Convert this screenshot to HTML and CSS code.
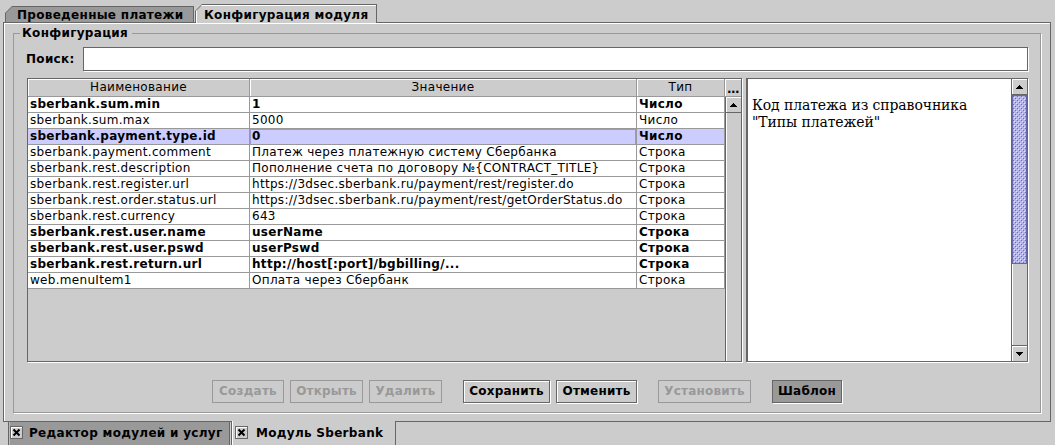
FILE: index.html
```html
<!DOCTYPE html>
<html lang="ru">
<head>
<meta charset="utf-8">
<title>Модуль Sberbank</title>
<link rel="stylesheet" href="styles.css">
</head>
<body>
<div class="tabs-top">
  <div class="tab tab-off"><span class="tab-label">Проведенные платежи</span></div>
  <div class="tab tab-on"><span class="tab-label">Конфигурация модуля</span></div>
</div>
<div class="panel">
  <fieldset class="group">
    <legend>Конфигурация</legend>
    <div class="group-body">
      <div class="search">
        <label class="search-label">Поиск:</label>
        <div class="field"></div>
      </div>
      <div class="split">
        <div class="table-pane">
          <div class="table">
            <div class="thead">
              <div class="th">Наименование</div>
              <div class="th">Значение</div>
              <div class="th">Тип</div>
            </div>
            <div class="row b"><div class="td">sberbank.sum.min</div><div class="td">1</div><div class="td">Число</div></div>
            <div class="row"><div class="td">sberbank.sum.max</div><div class="td">5000</div><div class="td">Число</div></div>
            <div class="row b sel"><div class="td">sberbank.payment.type.id</div><div class="td focus">0</div><div class="td">Число</div></div>
            <div class="row"><div class="td">sberbank.payment.comment</div><div class="td">Платеж через платежную систему Сбербанка</div><div class="td">Строка</div></div>
            <div class="row"><div class="td">sberbank.rest.description</div><div class="td">Пополнение счета по договору №{CONTRACT_TITLE}</div><div class="td">Строка</div></div>
            <div class="row"><div class="td">sberbank.rest.register.url</div><div class="td">https://3dsec.sberbank.ru/payment/rest/register.do</div><div class="td">Строка</div></div>
            <div class="row"><div class="td">sberbank.rest.order.status.url</div><div class="td">https://3dsec.sberbank.ru/payment/rest/getOrderStatus.do</div><div class="td">Строка</div></div>
            <div class="row"><div class="td">sberbank.rest.currency</div><div class="td">643</div><div class="td">Строка</div></div>
            <div class="row b"><div class="td">sberbank.rest.user.name</div><div class="td">userName</div><div class="td">Строка</div></div>
            <div class="row b"><div class="td">sberbank.rest.user.pswd</div><div class="td">userPswd</div><div class="td">Строка</div></div>
            <div class="row b"><div class="td">sberbank.rest.return.url</div><div class="td">http://host[:port]/bgbilling/...</div><div class="td">Строка</div></div>
            <div class="row"><div class="td">web.menuItem1</div><div class="td">Оплата через Сбербанк</div><div class="td">Строка</div></div>
          </div>
          <div class="tside">
            <div class="tcorner">...</div>
            <div class="vscroll">
              <div class="arrow arrow-up"><svg width="7" height="4" viewBox="0 0 7 4"><path d="M3 0h1v1h-1zM2 1h3v1h-3zM1 2h5v1h-5zM0 3h7v1h-7z"/></svg></div>
              <div class="track"></div>
            </div>
          </div>
        </div>
        <div class="text-pane">
          <div class="view">Код платежа из справочника<br>"Типы платежей"</div>
          <div class="vscroll">
            <div class="arrow arrow-up"><svg width="7" height="4" viewBox="0 0 7 4"><path d="M3 0h1v1h-1zM2 1h3v1h-3zM1 2h5v1h-5zM0 3h7v1h-7z"/></svg></div>
            <div class="thumb"></div>
            <div class="track"></div>
            <div class="arrow arrow-down"><svg width="7" height="4" viewBox="0 0 7 4"><path d="M0 0h7v1h-7zM1 1h5v1h-5zM2 2h3v1h-3zM3 3h1v1h-1z"/></svg></div>
          </div>
        </div>
      </div>
      <div class="buttons">
        <div class="btn off w-create">Создать</div>
        <div class="btn off w-open">Открыть</div>
        <div class="btn off w-del">Удалить</div>
        <div class="btn sep w-save">Сохранить</div>
        <div class="btn w-cancel">Отменить</div>
        <div class="btn off sep w-set">Установить</div>
        <div class="btn pressed sep w-tpl">Шаблон</div>
      </div>
    </div>
  </fieldset>
</div>
<div class="tabs-bottom">
  <div class="btab btab-off">
    <span class="xbox"><svg width="11" height="11" viewBox="0 0 11 11"><path d="M2.5 2.5L8.5 8.5M8.5 2.5L2.5 8.5" stroke="#000" stroke-width="2"/></svg></span>
    <span class="btab-text">Редактор модулей и услуг</span>
  </div>
  <div class="btab btab-on">
    <span class="xbox"><svg width="11" height="11" viewBox="0 0 11 11"><path d="M2.5 2.5L8.5 8.5M8.5 2.5L2.5 8.5" stroke="#000" stroke-width="2"/></svg></span>
    <span class="btab-text">Модуль Sberbank</span>
  </div>
</div>
</body>
</html>
```
FILE: styles.css
```css
* { box-sizing: border-box; }
html, body { margin: 0; padding: 0; }
body {
  width: 1055px;
  height: 445px;
  overflow: hidden;
  background: #cccccc;
  font-family: "DejaVu Sans", "Noto Sans", sans-serif;
  font-size: 12px;
  letter-spacing: 0.3px;
  color: #000;
}

/* ---------- top tabs ---------- */
.tabs-top {
  display: flex;
  align-items: flex-end;
  height: 22px;
  padding-left: 5px;
  gap: 1px;
}
.tab {
  background: #666666;
  clip-path: polygon(0 7px, 7px 0, 100% 0, 100% 100%, 0 100%);
  padding: 1px 1px 0 1px;
  font-weight: bold;
}
.tab-label {
  display: block;
  clip-path: polygon(0 6px, 6px 0, 100% 0, 100% 100%, 0 100%);
  line-height: 14px;
  white-space: nowrap;
}
.tab-off { width: 189px; height: 16px; }
.tab-off .tab-label {
  background: #999999;
  height: 15px;
  padding: 1px 0 0 11px;
}
.tab-on {
  width: 182px;
  height: 19px;
  margin-bottom: -1px;
  position: relative;
  z-index: 2;
}
.tab-on .tab-label {
  background: #cccccc;
  height: 18px;
  padding: 3px 0 0 8px;
  box-shadow: inset 1px 1px 0 #ffffff;
}

/* ---------- main panel ---------- */
.panel {
  margin: 0 4px 0 3px;
  height: 400px;
  border: 1px solid #666666;
  box-shadow: inset 1px 1px 0 #ffffff;
  padding: 3px 9px 8px 9px;
}
.group {
  margin: 0;
  min-width: 0;
  height: 387px;
  border: 1px solid #999999;
  box-shadow: 1px 1px 0 #ffffff;
  padding: 7px 12px 9px 12px;
}
.group legend {
  font-weight: bold;
  line-height: 14px;
  padding: 0 4px 0 2px;
  margin-left: -6px;
}
.group-body {
  display: flex;
  flex-direction: column;
}

/* search */
.search {
  display: flex;
  align-items: center;
  height: 24px;
  margin-bottom: 7px;
}
.search-label {
  width: 57px;
  font-weight: bold;
  flex: none;
}
.field {
  flex: 1;
  height: 24px;
  background: #ffffff;
  border: 1px solid #666666;
  box-shadow: 1px 1px 0 #ffffff;
}

/* split */
.split {
  display: flex;
  height: 285px;
  margin-bottom: 17px;
  padding-left: 1px;
}
.table-pane {
  width: 715px;
  height: 284px;
  flex: none;
  border: 1px solid #666666;
  box-shadow: 1px 1px 0 #ffffff;
  display: flex;
  background: #cccccc;
}
.table { width: 697px; flex: none; }
.thead, .row {
  display: grid;
  grid-template-columns: 222px 387px 88px;
}
.thead { height: 18px; }
.th {
  border-right: 1px solid #999999;
  border-bottom: 1px solid #999999;
  box-shadow: inset 1px 1px 0 #ffffff;
  text-align: center;
  line-height: 17px;
  white-space: nowrap;
}
.row { height: 16px; background: #ffffff; }
.row.b { font-weight: bold; }
.row.sel { background: #ccccff; }
.td {
  border-right: 1px solid #999999;
  border-bottom: 1px solid #999999;
  padding-left: 2px;
  line-height: 15px;
  white-space: nowrap;
  overflow: hidden;
}
.td.focus { box-shadow: inset 1px 1px 0 #9999cc, inset -1px 0 0 #9999cc; }

.tside {
  flex: 1;
  display: flex;
  flex-direction: column;
}
.tcorner {
  height: 18px;
  flex: none;
  border-bottom: 1px solid #999999;
  box-shadow: inset 1px 1px 0 #ffffff;
  text-align: center;
  font-weight: bold;
  line-height: 14px;
  padding-top: 3px;
  letter-spacing: -0.5px;
}
.vscroll {
  width: 16px;
  flex: 1;
  display: flex;
  flex-direction: column;
  background: #cccccc;
  border-left: 1px solid #666666;
}
.text-pane .vscroll { flex: none; height: 100%; }
.arrow {
  height: 16px;
  flex: none;
  display: flex;
  align-items: center;
  justify-content: center;
  background: #cccccc;
  box-shadow: inset 1px 1px 0 #ffffff;
}
.arrow svg { display: block; fill: #000; }
.arrow-up { border-bottom: 1px solid #666666; }
.arrow-down { border-top: 1px solid #666666; }
.track {
  flex: 1;
  box-shadow: inset 1px 0 0 #ffffff;
}
.thumb {
  height: 169px;
  flex: none;
  border: 1px solid #6666aa;
  background-color: #b4b4e6;
  background-image:
    conic-gradient(from 0deg at 1px 1px, transparent 0 75%, #e0e0ff 0),
    conic-gradient(from 0deg at 1px 1px, transparent 0 75%, #e0e0ff 0),
    conic-gradient(from 0deg at 1px 1px, transparent 0 75%, #7070a8 0),
    conic-gradient(from 0deg at 1px 1px, transparent 0 75%, #7070a8 0);
  background-size: 4px 4px;
  background-position: 1px 1px, 3px 3px, 2px 2px, 4px 4px;
}

.text-pane {
  margin-left: 4px;
  width: 282px;
  height: 284px;
  flex: none;
  border: 1px solid #666666;
  border-left-width: 2px;
  box-shadow: 1px 1px 0 #ffffff;
  display: flex;
}
.view {
  flex: 1;
  background: #ffffff;
  padding: 18px 0 0 4px;
  font-family: "DejaVu Serif", "Liberation Serif", serif;
  font-size: 14px;
  line-height: 17px;
  letter-spacing: -0.1px;
  white-space: nowrap;
}

/* buttons */
.buttons {
  display: flex;
  justify-content: center;
  gap: 6px;
  height: 23px;
}
.btn {
  height: 23px;
  flex: none;
  border: 1px solid #666666;
  box-shadow: inset 1px 1px 0 #ffffff, 1px 1px 0 #ffffff;
  background: #cccccc;
  font-weight: bold;
  line-height: 21px;
  text-align: center;
  white-space: nowrap;
  letter-spacing: 0.2px;
}
.btn.off {
  color: #999999;
  border-color: #999999;
  box-shadow: none;
}
.btn.pressed { background: #999999; box-shadow: 1px 1px 0 #ffffff; }
.btn.sep { margin-left: 15px; }
.w-create { width: 72px; }
.w-open { width: 73px; }
.w-del { width: 73px; }
.w-save { width: 87px; }
.w-cancel { width: 81px; }
.w-set { width: 93px; }
.w-tpl { width: 70px; }

/* ---------- bottom tabs ---------- */
.tabs-bottom {
  display: flex;
  align-items: flex-start;
  height: 23px;
  padding-left: 8px;
  gap: 1px;
}
.btab {
  height: 24px;
  border: 1px solid #666666;
  border-top: none;
  display: flex;
  align-items: flex-start;
  font-weight: bold;
  white-space: nowrap;
}
.btab-off {
  width: 222px;
  background: #999999;
  padding: 4px 0 0 1px;
  box-shadow: inset 1px 0 0 #bbbbbb;
}
.btab-on {
  width: 165px;
  background: #cccccc;
  margin-top: -1px;
  height: 25px;
  position: relative;
  z-index: 2;
  padding: 5px 0 0 3px;
  box-shadow: inset 1px 0 0 #ffffff;
}
.xbox {
  width: 13px;
  height: 13px;
  flex: none;
  border: 1px solid #666666;
  background: #cccccc;
  box-shadow: inset 1px 1px 0 #ffffff;
  display: flex;
  align-items: center;
  justify-content: center;
}
.xbox svg { display: block; }
.btab-text { line-height: 14px; }
.btab-off .btab-text { margin-left: 6px; }
.btab-on .btab-text { margin-left: 8px; }
```
